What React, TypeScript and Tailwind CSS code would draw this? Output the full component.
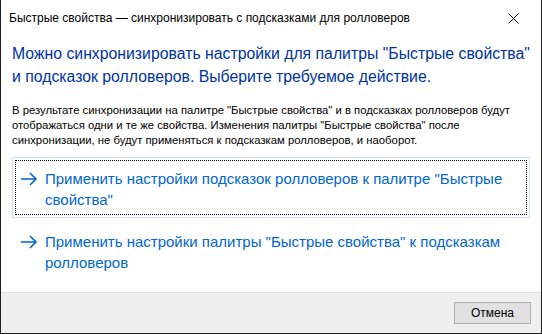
import React from "react";

const font = { fontFamily: '"Liberation Sans", "Noto Sans", sans-serif' };

const Arrow = () => (
  <svg width="18" height="14" viewBox="0 0 18 14" className="shrink-0 mt-[4px]">
    <path d="M1 7h15M10 1l6 6-6 6" fill="none" stroke="#0066cc" strokeWidth="1.6" />
  </svg>
);

const CommandLink = ({ lines, focused }: { lines: string[]; focused?: boolean }) => (
  <div
    className={`mx-[11px] p-[2px] border ${focused ? "border-[#cce4f7]" : "border-transparent"}`}
  >
    <div
      className={`flex gap-[7px] pl-[4px] pr-2 pt-[7px] pb-[4px] border border-dotted ${
        focused ? "border-black" : "border-transparent"
      }`}
    >
      <Arrow />
      <div className="text-[15px] leading-[21px] text-[#0066cc] whitespace-nowrap">
        {lines.map((l) => (
          <div key={l}>{l}</div>
        ))}
      </div>
    </div>
  </div>
);

export default function App() {
  return (
    <div
      style={font}
      className="w-[542px] h-[334px] bg-white border-x border-b border-[#1f1f1f] flex flex-col text-black"
    >
      {/* title bar */}
      <div className="h-[36px] flex items-center justify-between pl-[8px] pr-[22px]">
        <span className="text-[12px]">
          Быстрые свойства — синхронизировать с подсказками для ролловеров
        </span>
        <svg width="11" height="11" viewBox="0 0 11 11">
          <path d="M0.5 0.5l10 10M10.5 0.5l-10 10" stroke="#000" strokeWidth="1" />
        </svg>
      </div>

      <div className="flex-1 flex flex-col">
        <div className="px-[11px] pt-[6px] text-[15.8px] leading-[23px] text-[#0033a0] whitespace-nowrap">
          <div>Можно синхронизировать настройки для палитры "Быстрые свойства"</div>
          <div>и подсказок ролловеров. Выберите требуемое действие.</div>
        </div>
        <div className="px-[11px] pt-[15px] text-[11.3px] leading-[15px] whitespace-nowrap">
          <div>
            В результате синхронизации на палитре "Быстрые свойства" и в подсказках ролловеров будут
          </div>
          <div>отображаться одни и те же свойства. Изменения палитры "Быстрые свойства" после</div>
          <div>синхронизации, не будут применяться к подсказкам ролловеров, и наоборот.</div>
        </div>

        <div className="mt-[9px] flex flex-col gap-[2px]">
          <CommandLink
            focused
            lines={['Применить настройки подсказок ролловеров к палитре "Быстрые', 'свойства"']}
          />
          <CommandLink
            lines={['Применить настройки палитры "Быстрые свойства" к подсказкам', "ролловеров"]}
          />
        </div>
      </div>

      <div className="h-[41px] bg-[#f0f0f0] border-t border-[#dfdfdf] flex items-center justify-end pr-[10px]">
        <button className="w-[77px] h-[22px] bg-[#e1e1e1] border border-[#adadad] text-[12px] text-black">
          Отмена
        </button>
      </div>
    </div>
  );
}
